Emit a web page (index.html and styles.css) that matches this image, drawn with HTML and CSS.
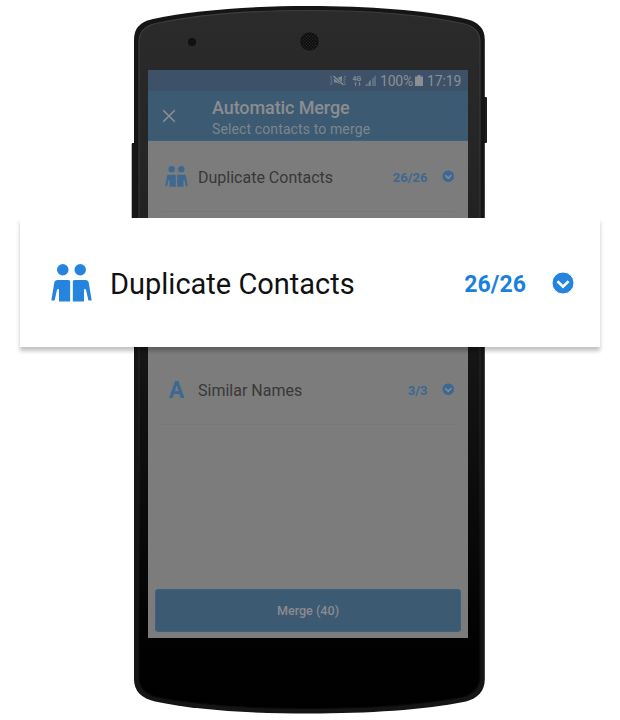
FILE: index.html
```html
<!DOCTYPE html>
<html lang="en">
<head>
<meta charset="utf-8">
<title>Automatic Merge</title>
<link rel="stylesheet" href="styles.css">
</head>
<body>
<svg width="0" height="0" class="defs">
  <symbol id="people" viewBox="0 0 40 37">
    <circle cx="11.5" cy="5.6" r="5.6"/><circle cx="28.5" cy="5.6" r="5.6"/>
    <path d="M6 15.500H17Q18.700 15.500 18.700 17.200V36.500H7.800V24.500H6L3.500 35.500H.300L3.200 18Q3.700 15.500 6 15.500Z"/>
    <path d="M34 15.500H23Q21.300 15.500 21.300 17.200V36.500H32.200V24.500H34L36.500 35.500H39.700L36.800 18Q36.300 15.500 34 15.500Z"/>
  </symbol>
  <symbol id="chev" viewBox="0 0 22 22">
    <circle cx="11" cy="11" r="11"/>
    <path class="tick" d="M5.500 9.300 11 14.600 16.500 9.300"/>
  </symbol>
</svg>
<main class="stage">
  <section class="phone">
    <svg class="body" width="620" height="720" viewBox="0 0 620 720">
      <defs>
        <linearGradient id="face" x1="0" y1="0" x2="0" y2="1">
          <stop offset="0" stop-color="#2b2b2b"/><stop offset=".25" stop-color="#242424"/>
          <stop offset=".55" stop-color="#121212"/><stop offset=".9" stop-color="#020202"/><stop offset="1" stop-color="#000"/>
        </linearGradient>
        <linearGradient id="rim" x1="0" y1="0" x2="0" y2="1">
          <stop offset="0" stop-color="#3d3d3d"/><stop offset=".3" stop-color="#303030"/><stop offset=".8" stop-color="#121212"/><stop offset="1" stop-color="#080808"/>
        </linearGradient>
        <pattern id="mesh" width="3" height="3" patternUnits="userSpaceOnUse"><path d="M0 0h1v1h-1zM1.500 1.500h1v1h-1z" fill="#292929"/></pattern>
      </defs>
      <rect x="131.700" y="143" width="4" height="86" rx="1" fill="#161616"/>
      <rect x="483" y="97" width="4" height="46" rx="1" fill="#1d1d1d"/>
      <path d="M134 40C134 28 140 22 153 19C195 10 250 6 309 6C368 6 424 10 466 19C478 22 484.800 28 484.800 40V679C484.800 691 478 698 466 701.500C424 710 368 713.500 309 713.500C250 713.500 195 710 155 701.500C141 698 134 691 134 679Z" fill="#151515"/>
      <path d="M139 42C139 32 144 26 156 23.500C198 14.500 252 10.500 309 10.500C366 10.500 421 14.500 463 23.500C474 26 480 32 480 42V676C480 687 474 694 463 697C421 705 366 708.500 309 708.500C252 708.500 198 705 156 697C145 694 139 687 139 676Z" fill="url(#face)" stroke="url(#rim)" stroke-width="1.200"/>
      <circle cx="192" cy="42" r="4" fill="#111"/>
      <circle cx="309.500" cy="41.500" r="9.500" fill="#101010" stroke="#303030" stroke-width=".6"/>
      <circle cx="309.500" cy="41.500" r="8" fill="url(#mesh)"/>
    </svg>
    <div class="screen">
      <div class="status">
        <svg class="st-icons" width="50" height="13" viewBox="0 0 50 13">
          <path d="M4 4.500H6.500L12 2V10.500L6.500 8.500H4Z" fill="#808a94"/>
          <path d="M3.500 2 13.500 11" stroke="#3d5269" stroke-width="2.400"/>
          <path d="M3.500 2 13.500 11" stroke="#8a9096" stroke-width="1.200"/>
          <path d="M1 2v1.500l1 1-1 1 1 1-1 1 1 1-1 1V11M15 2v1.500l-1 1 1 1-1 1 1 1-1 1 1 1V11" fill="none" stroke="#7a8590"/>
          <text x="22.500" y="6.600" class="net">4G</text>
          <path d="M25.500 8 24.200 10H25V12H26V10H26.800ZM29.500 12 28.200 10H29V8H30V10H30.800Z" fill="#7a8590"/>
          <path d="M46 1V12H42V5ZM41 6V12H38V9Z" fill="#5b6f82"/>
          <path d="M37.500 9.500V12H35.500V11ZM40.500 6V12H39V7.500Z" fill="#758390"/>
        </svg>
        <span class="pct">100%</span>
        <svg class="bat" width="8" height="11" viewBox="0 0 8 11"><path d="M2.500 0h3v1.500H8V11H0V1.500h2.500Z" fill="#8b8f93"/></svg>
        <span class="time">17:19</span>
      </div>
      <header class="bar">
        <svg class="close" width="14" height="14" viewBox="0 0 14 14"><path d="M1.200 1.200 12.800 12.800M12.800 1.200 1.200 12.800"/></svg>
        <div class="titles"><h1>Automatic Merge</h1><p>Select contacts to merge</p></div>
      </header>
      <div class="list">
        <div class="row first">
          <svg class="icon"><use href="#people"/></svg>
          <span class="name">Duplicate Contacts</span><b>26/26</b>
          <svg class="chev"><use href="#chev"/></svg>
        </div>
        <div class="row last">
          <span class="icon letter">A</span>
          <span class="name">Similar Names</span><b>3/3</b>
          <svg class="chev"><use href="#chev"/></svg>
        </div>
      </div>
      <button class="merge">Merge (40)</button>
    </div>
  </section>
  <section class="callout">
    <svg class="big-icon"><use href="#people"/></svg>
    <span class="big-name">Duplicate Contacts</span>
    <b>26/26</b>
    <svg class="big-chev"><use href="#chev"/></svg>
  </section>
</main>
</body>
</html>
```
FILE: styles.css
```css
* { box-sizing: border-box; }
body { margin: 0; background: #fff; font-family: Roboto, "Liberation Sans", sans-serif; }
.defs { position: absolute; }
.stage { position: relative; width: 620px; height: 720px; overflow: hidden; }
.phone { padding: 70px 152px 82px 148px; }
.body { position: absolute; left: 0; top: 0; }
.screen { position: relative; width: 320px; height: 568px; background: #7c7c7c; display: flex; flex-direction: column; }
.status { height: 21px; background: #3d5269; display: flex; align-items: center; justify-content: flex-end; padding-right: 7px; color: #8a8f94; font-size: 14px; }
.net { font-size: 7px; font-weight: 700; fill: #808a94; }
.pct { width: 33px; white-space: nowrap; letter-spacing: -.2px; }
.bat { margin: 0 4px 0 2px; }
.time { width: 34px; letter-spacing: -.15px; }
.bar { height: 50px; background: #3d5a73; border-bottom: 1px solid #3b6284; display: flex; align-items: center; padding-left: 14px; color: #898b8d; }
.close { fill: none; stroke: #8e9092; stroke-width: 1.500; }
.titles { margin: 4px 0 0 36px; }
h1 { margin: 0; font-size: 18px; line-height: 22px; font-weight: 500; color: #8b8d8f; letter-spacing: -.1px; }
p { margin: 0; font-size: 14px; line-height: 20px; color: #7c858d; letter-spacing: .12px; }
.list { flex: 1; padding: 0 14px; }
.row { height: 71px; display: flex; align-items: center; border-bottom: 1px solid #777; padding: 1px 0 0 3px; }
.row.last { margin-top: 142px; }
.icon { width: 23px; height: 21px; fill: #3c6891; }
.letter { color: #3c6891; font-size: 23px; line-height: 23px; font-weight: 700; text-align: center; }
.name { margin: 2px 0 0 10px; flex: 1; font-size: 16px; color: #383838; }
.row b { font-size: 13px; font-weight: 700; color: #3c6891; margin-top: 1px; }
.chev { width: 12.5px; height: 12.5px; margin-left: 14px; fill: #3c6891; stroke: #8c8c8c; }
.tick { fill: none; stroke-width: 2.600; }
.chev circle, .big-chev circle { stroke: none; }
.merge { margin: 0 7px 6px; height: 43px; border: 1px solid #3b6284; border-radius: 3px; background: #3d5a73; color: #898b8d; font: 500 12.6px Roboto, sans-serif; padding: 0; }
.callout { position: absolute; left: 20px; top: 218px; width: 580px; height: 129px; background: #fff; box-shadow: 0 4px 4px rgba(0,0,0,.24); display: flex; align-items: center; padding: 1px 26px 0 31px; }
.big-icon { width: 41px; height: 38px; fill: #2585de; }
.big-name { flex: 1; margin: 1px 0 0 18px; font-size: 29px; color: #111; }
.callout b { font-size: 23px; font-weight: 700; color: #1a80df; margin-top: 2px; letter-spacing: .1px; }
.big-chev { width: 22px; height: 22px; margin-left: 26px; fill: #2585de; stroke: #fff; }
```
